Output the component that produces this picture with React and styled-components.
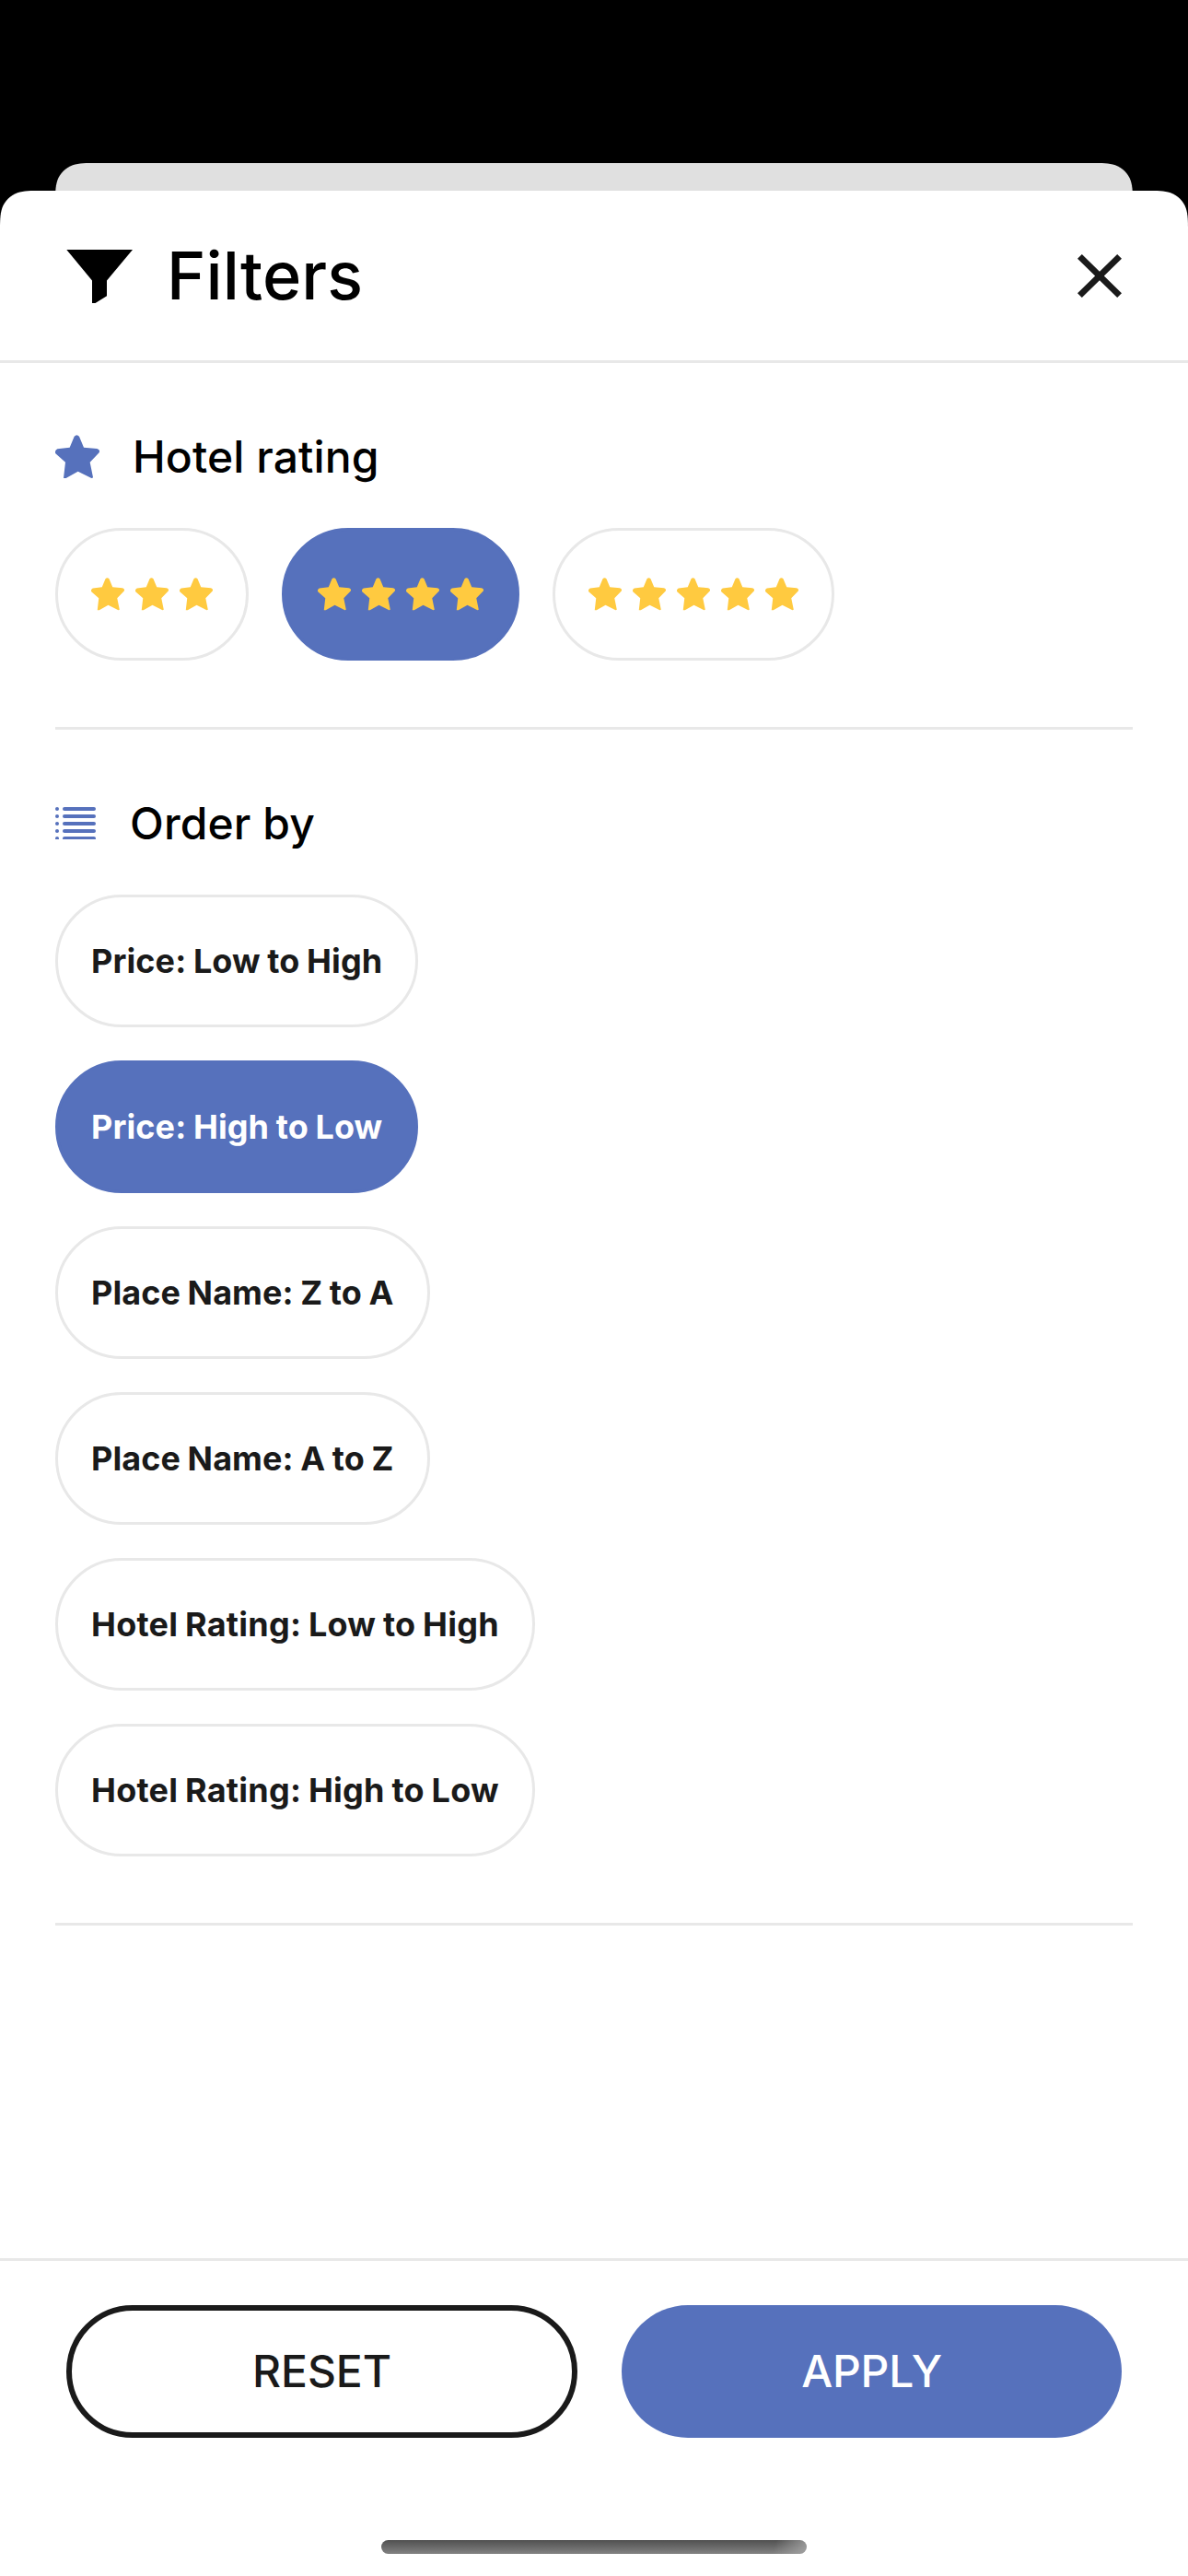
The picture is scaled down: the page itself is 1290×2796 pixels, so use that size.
import React from "react";
import styled, { createGlobalStyle } from "styled-components";

const BLUE = "#5671bc";
const INK = "#1a1a1a";
const LINE = "#e8e8e8";
const YELLOW = "#ffca40";

const Global = createGlobalStyle`
  html, body { margin: 0; padding: 0; background: #000; }
  * { box-sizing: border-box; }
  button { margin: 0; font-family: inherit; cursor: pointer; }
  h1, h2 { margin: 0; }
`;

const Screen = styled.div`
  width: 1290px;
  height: 2796px;
  display: flex;
  flex-direction: column;
  padding-top: 177px;
  background: #000;
  font-family: "Inter", "Liberation Sans", sans-serif;
  overflow: hidden;
`;

const PageBehind = styled.div`
  height: 30px;
  margin: 0 60px;
  flex: none;
  background: #e0e0e0;
  clip-path: path("M0 60V45.86C0 32.65 0 26.05 2.25 18.94C5.07 11.18 11.18 5.07 18.94 2.25C26.05 0 32.65 0 45.86 0H1124.14C1137.35 0 1143.95 0 1151.06 2.25C1158.82 5.07 1164.93 11.18 1167.75 18.94C1170 26.05 1170 32.65 1170 45.86V60Z");
`;

const Sheet = styled.main`
  flex: 1;
  min-height: 0;
  display: flex;
  flex-direction: column;
  background: #fff;
  clip-path: path("M0 2589V45.86C0 32.65 0 26.05 2.25 18.94C5.07 11.18 11.18 5.07 18.94 2.25C26.05 0 32.65 0 45.86 0H1244.14C1257.35 0 1263.95 0 1271.06 2.25C1278.82 5.07 1284.93 11.18 1287.75 18.94C1290 26.05 1290 32.65 1290 45.86V2589Z");
`;

const Header = styled.header`
  flex: none;
  height: 187px;
  display: flex;
  align-items: center;
  padding: 0 72px;
  border-bottom: 3px solid ${LINE};
`;

const FunnelIcon = styled.svg`
  width: 72px;
  height: 58px;
  margin: 2px 37px 0 0;
`;

const Title = styled.h1`
  flex: 1;
  padding-bottom: 2px;
  font-size: 72px;
  line-height: 87px;
  font-weight: 500;
  letter-spacing: 0.1px;
  color: #000;
`;

const CloseButton = styled.button`
  display: flex;
  padding: 0;
  border: 0;
  background: none;
`;

const CloseIcon = styled.svg`
  width: 48px;
  height: 47px;
  fill: ${INK};
`;

const Content = styled.div`
  flex: 1;
  min-height: 0;
  padding: 0 60px;
`;

const Section = styled.section`
  padding: 72px 0;
  border-bottom: 3px solid ${LINE};
`;

const SectionHeader = styled.div`
  height: 59px;
  margin-bottom: 48px;
  display: flex;
  align-items: center;
  gap: 36px;
`;

const SectionTitle = styled.h2`
  font-size: 48px;
  line-height: 58px;
  font-weight: 500;
  letter-spacing: 0.1px;
  color: #000;
`;

const StarShape = styled.svg`
  width: ${(p) => p.$size}px;
  height: ${(p) => p.$size}px;
  flex: none;
  fill: ${(p) => p.$color};
`;

const ListIcon = styled.svg`
  width: 44px;
  height: 35px;
  margin-right: 1px;
  fill: ${BLUE};
`;

const Options = styled.div`
  display: flex;
  flex-direction: ${(p) => (p.$stacked ? "column" : "row")};
  align-items: flex-start;
  gap: 36px;
`;

const Pill = styled.button`
  height: 144px;
  display: flex;
  align-items: center;
  gap: 12px;
  padding: 0 36px;
  border: 3px solid ${(p) => (p.$selected ? BLUE : LINE)};
  border-radius: 72px;
  background: ${(p) => (p.$selected ? BLUE : "#fff")};
  color: ${(p) => (p.$selected ? "#fff" : INK)};
  font-size: 36px;
  font-weight: 700;
  line-height: 44px;
  letter-spacing: ${(p) => p.$tracking || 0}px;
  word-spacing: -1px;
  white-space: nowrap;
`;

const Footer = styled.footer`
  flex: none;
  height: 345px;
  display: flex;
  flex-direction: column;
  align-items: center;
  justify-content: space-between;
  padding: 48px 72px 24px;
  border-top: 3px solid ${LINE};
`;

const Actions = styled.div`
  width: 100%;
  display: flex;
  gap: 48px;
`;

const ActionButton = styled.button`
  flex: 1 1 0;
  height: 144px;
  padding: 0;
  border: ${(p) => (p.$primary ? "0" : `6px solid ${INK}`)};
  border-radius: 72px;
  background: ${(p) => (p.$primary ? BLUE : "#fff")};
  color: ${(p) => (p.$primary ? "#fff" : INK)};
  font-size: 48px;
  font-weight: 500;
  line-height: 58px;
  letter-spacing: ${(p) => (p.$primary ? "-0.2px" : "-0.05px")};
`;

const HomeIndicator = styled.div`
  width: 462px;
  height: 15px;
  border-radius: 7.5px;
  background:
    linear-gradient(105deg, rgba(170, 170, 170, 0) 92%, rgba(170, 170, 170, 0.8) 100%),
    linear-gradient(#505050, #828282);
`;

function Star({ size, color }) {
  return (
    <StarShape $size={size} $color={color} viewBox="0 0 144 144">
      <path d="M62 5Q70 -4 78 5L93 41L136 45Q147 48 143 58L113 89L123 138Q123 141 118 141L74 119L35 141H27L33 89L1 61Q-3 51 7 46L47 41Z" />
    </StarShape>
  );
}

const ratings = [3, 4, 5];
const orders = [
  { label: "Price: Low to High", tracking: 0.1 },
  { label: "Price: High to Low", tracking: 0.1, selected: true },
  { label: "Place Name: Z to A", tracking: 0.08 },
  { label: "Place Name: A to Z", tracking: 0.08 },
  { label: "Hotel Rating: Low to High", tracking: 0.24 },
  { label: "Hotel Rating: High to Low", tracking: 0.24 },
];

export default function App() {
  return (
    <Screen>
      <Global />
      <PageBehind />
      <Sheet>
        <Header>
          <FunnelIcon viewBox="0 0 72 58">
            <path d="M0.3 0H72L44 33.5V50.3L31.5 58H28V33.5Z" />
          </FunnelIcon>
          <Title>Filters</Title>
          <CloseButton aria-label="Close">
            <CloseIcon viewBox="5 5 14 14" preserveAspectRatio="none">
              <path d="M19 6.41L17.59 5 12 10.59 6.41 5 5 6.41 10.59 12 5 17.59 6.41 19 12 13.41 17.59 19 19 17.59 13.41 12z" />
            </CloseIcon>
          </CloseButton>
        </Header>
        <Content>
          <Section>
            <SectionHeader>
              <Star size={48} color={BLUE} />
              <SectionTitle>Hotel rating</SectionTitle>
            </SectionHeader>
            <Options>
              {ratings.map((count) => (
                <Pill key={count} $selected={count === 4} aria-label={`${count} stars`}>
                  {Array.from({ length: count }, (_, i) => (
                    <Star key={i} size={36} color={YELLOW} />
                  ))}
                </Pill>
              ))}
            </Options>
          </Section>
          <Section>
            <SectionHeader>
              <ListIcon viewBox="0 0 44 35">
                {[0, 8, 16, 24, 32].map((y) => (
                  <g key={y}>
                    <circle cx="2" cy={y + 2} r="2" />
                    <rect x="8" y={y} width="36" height="4" rx="2" />
                  </g>
                ))}
              </ListIcon>
              <SectionTitle>Order by</SectionTitle>
            </SectionHeader>
            <Options $stacked>
              {orders.map(({ label, tracking, selected }) => (
                <Pill key={label} $selected={selected} $tracking={tracking}>
                  {label}
                </Pill>
              ))}
            </Options>
          </Section>
        </Content>
        <Footer>
          <Actions>
            <ActionButton>RESET</ActionButton>
            <ActionButton $primary>APPLY</ActionButton>
          </Actions>
          <HomeIndicator />
        </Footer>
      </Sheet>
    </Screen>
  );
}
